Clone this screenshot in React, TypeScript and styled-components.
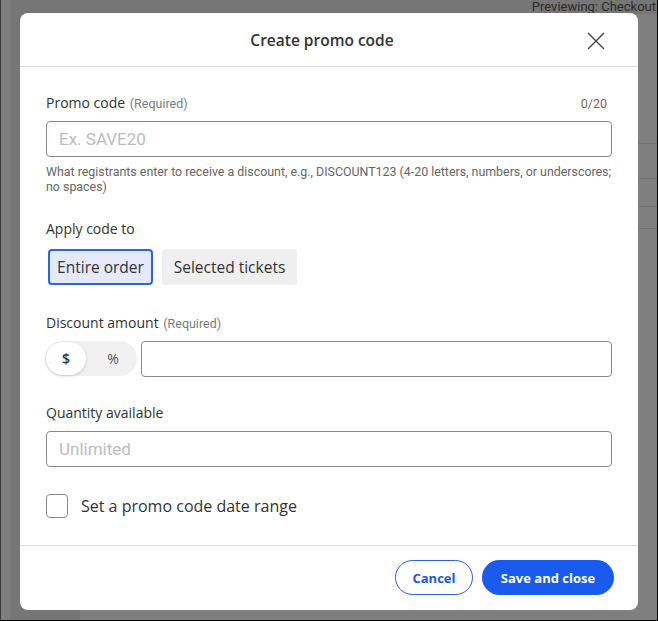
import styled, { createGlobalStyle } from "styled-components";

const GlobalStyle = createGlobalStyle`
  html, body {
    margin: 0;
    padding: 0;
  }
  body {
    font-family: "Open Sans", Lato, sans-serif;
  }
  * {
    box-sizing: border-box;
  }
`;

const panelRows = [130, 35, 28, 22, 400];

export default function App() {
  return (
    <>
      <GlobalStyle />
      <Frame>
        <SideNav />
        <Main>
          <TopBar>
            <Preview>Previewing: Checkout</Preview>
          </TopBar>
          <Content>
            <Gutter />
            <Panel>
              {panelRows.map((h, i) => (
                <PanelRow key={i} $height={h} />
              ))}
            </Panel>
          </Content>
        </Main>

        <Overlay>
          <Modal>
            <Header>
              <Title>Create promo code</Title>
              <CloseButton aria-label="Close">
                <svg width="18" height="18" viewBox="0 0 18 18">
                  <path
                    d="M1 1 L17 17 M17 1 L1 17"
                    stroke="#444"
                    strokeWidth="1.4"
                    fill="none"
                  />
                </svg>
              </CloseButton>
            </Header>

            <Body>
              <LabelRow>
                <Label>
                  Promo code <Required>(Required)</Required>
                </Label>
                <Counter>0/20</Counter>
              </LabelRow>
              <TextInput placeholder="Ex. SAVE20" />
              <Help>
                What registrants enter to receive a discount, e.g., DISCOUNT123
                (4-20 letters, numbers, or underscores; no spaces)
              </Help>

              <LabelRow $gap={26}>
                <Label>Apply code to</Label>
              </LabelRow>
              <SegmentGroup>
                <Segment $active $width={105}>
                  Entire order
                </Segment>
                <Segment $width={135}>Selected tickets</Segment>
              </SegmentGroup>

              <LabelRow $gap={29}>
                <Label>
                  Discount amount <Required>(Required)</Required>
                </Label>
              </LabelRow>
              <AmountRow>
                <UnitToggle>
                  <UnitOption $active>$</UnitOption>
                  <UnitOption>%</UnitOption>
                </UnitToggle>
                <TextInput />
              </AmountRow>

              <LabelRow $gap={27}>
                <Label>Quantity available</Label>
              </LabelRow>
              <TextInput placeholder="Unlimited" />

              <CheckRow>
                <CheckBox />
                <CheckLabel>Set a promo code date range</CheckLabel>
              </CheckRow>
            </Body>

            <Footer>
              <OutlineButton>Cancel</OutlineButton>
              <PrimaryButton>Save and close</PrimaryButton>
            </Footer>
          </Modal>
        </Overlay>
      </Frame>
    </>
  );
}

const Frame = styled.div`
  position: relative;
  width: 658px;
  height: 621px;
  display: flex;
  overflow: hidden;
  background: #ececec;
  border-left: 1px solid #3c3c3c;
  border-right: 1px solid #000;
  border-bottom: 1px solid #000;
`;

const SideNav = styled.div`
  width: 9px;
  background: #ffffff;
`;

const Main = styled.div`
  flex: 1;
  display: flex;
  flex-direction: column;
`;

const TopBar = styled.div`
  height: 30px;
  display: flex;
  justify-content: flex-end;
`;

const Preview = styled.span`
  font-family: Roboto, "Liberation Sans", sans-serif;
  font-size: 13px;
  line-height: 15px;
  color: #585858;
  margin-top: -1px;
  margin-right: 1px;
`;

const Content = styled.div`
  flex: 1;
  display: flex;
`;

const Gutter = styled.div`
  width: 70px;
`;

const Panel = styled.div`
  flex: 1;
  background: #ffffff;
`;

const PanelRow = styled.div<{ $height: number }>`
  height: ${(p) => p.$height}px;
  border-bottom: 1px solid #e6e6e6;
`;

const Overlay = styled.div`
  position: absolute;
  inset: 0;
  background: rgba(0, 0, 0, 0.5);
  padding: 13px 0 0 19px;
`;

const Modal = styled.div`
  width: 618px;
  height: 597px;
  background: #ffffff;
  border-radius: 8px;
  display: flex;
  flex-direction: column;
  overflow: hidden;
`;

const Header = styled.div`
  position: relative;
  height: 54px;
  flex-shrink: 0;
  display: flex;
  align-items: center;
  justify-content: center;
  padding-right: 14px;
  border-bottom: 1px solid #dcdcdc;
`;

const Title = styled.h2`
  margin: 0;
  padding-top: 1px;
  font-size: 15.5px;
  font-weight: 600;
  color: #333333;
`;

const CloseButton = styled.button`
  position: absolute;
  right: 32px;
  top: 18px;
  width: 20px;
  height: 20px;
  padding: 1px;
  border: none;
  background: none;
  cursor: pointer;
`;

const Body = styled.div`
  flex: 1;
  padding: 27px 26px 0;
  display: flex;
  flex-direction: column;
`;

const LabelRow = styled.div<{ $gap?: number }>`
  display: flex;
  justify-content: space-between;
  align-items: baseline;
  height: 18px;
  margin-top: ${(p) => p.$gap ?? 0}px;
`;

const Label = styled.span`
  font-size: 14px;
  line-height: 18px;
  color: #333333;
`;

const Required = styled.span`
  font-family: Roboto, "Liberation Sans", sans-serif;
  font-size: 12.5px;
  color: #7a7a7a;
  margin-left: 1px;
`;

const Counter = styled.span`
  font-family: Roboto, "Liberation Sans", sans-serif;
  font-size: 12.5px;
  color: #6a6a6a;
  margin-right: 5px;
`;

const TextInput = styled.input`
  width: 100%;
  height: 36px;
  margin-top: 9px;
  padding: 0 12px;
  border: 1px solid #8a8a8a;
  border-radius: 4px;
  font-family: Roboto, "Liberation Sans", sans-serif;
  font-size: 17px;
  color: #333333;
  background: #ffffff;
  outline: none;

  &::placeholder {
    color: #bcbcbc;
  }
`;

const Help = styled.p`
  margin: 7px 0 0;
  font-family: Roboto, "Liberation Sans", sans-serif;
  font-size: 12.4px;
  line-height: 15px;
  color: #666666;
`;

const SegmentGroup = styled.div`
  display: flex;
  gap: 9px;
  margin-top: 11px;
  padding-left: 2px;
`;

const Segment = styled.button<{ $active?: boolean; $width: number }>`
  width: ${(p) => p.$width}px;
  height: 36px;
  padding: 0;
  border: 2px solid ${(p) => (p.$active ? "#2d63e6" : "transparent")};
  border-radius: 4px;
  background: ${(p) => (p.$active ? "#e4eafb" : "#efefef")};
  font-family: "Open Sans", Lato, sans-serif;
  font-size: 15.5px;
  color: #333333;
  cursor: pointer;
`;

const AmountRow = styled.div`
  display: flex;
  align-items: flex-start;
  gap: 4px;
  margin-left: -1px;

  ${TextInput} {
    flex: 1;
    width: auto;
  }
`;

const UnitToggle = styled.div`
  width: 92px;
  height: 35px;
  margin-top: 9px;
  padding: 1px;
  display: flex;
  align-items: center;
  border-radius: 18px;
  background: #f0f0f0;
`;

const UnitOption = styled.span<{ $active?: boolean }>`
  width: ${(p) => (p.$active ? "40px" : "auto")};
  flex: ${(p) => (p.$active ? "none" : "1")};
  height: 33px;
  display: flex;
  align-items: center;
  justify-content: center;
  padding-left: ${(p) => (p.$active ? "0" : "4px")};
  border-radius: 17px;
  font-size: 14px;
  font-weight: ${(p) => (p.$active ? 600 : 400)};
  color: ${(p) => (p.$active ? "#333333" : "#555555")};
  background: ${(p) => (p.$active ? "#ffffff" : "transparent")};
  box-shadow: ${(p) => (p.$active ? "0 1px 3px rgba(0, 0, 0, 0.18)" : "none")};
`;

const CheckRow = styled.div`
  display: flex;
  align-items: center;
  gap: 13px;
  margin-top: 27px;
`;

const CheckBox = styled.span`
  width: 22px;
  height: 24px;
  border: 1px solid #8a8a8a;
  border-radius: 4px;
  background: #ffffff;
`;

const CheckLabel = styled.span`
  font-size: 16px;
  color: #333333;
`;

const Footer = styled.div`
  height: 65px;
  flex-shrink: 0;
  display: flex;
  align-items: center;
  justify-content: flex-end;
  gap: 9px;
  padding: 0 24px 1px 0;
  border-top: 1px solid #dcdcdc;
`;

const OutlineButton = styled.button`
  width: 78px;
  height: 35px;
  border: 1px solid #2a5fe6;
  border-radius: 18px;
  background: #ffffff;
  font-family: "Open Sans", Lato, sans-serif;
  font-size: 13px;
  font-weight: 700;
  color: #1d56e0;
  cursor: pointer;
`;

const PrimaryButton = styled.button`
  width: 132px;
  height: 35px;
  border: none;
  border-radius: 18px;
  background: #1a5bef;
  font-family: "Open Sans", Lato, sans-serif;
  font-size: 13px;
  font-weight: 700;
  color: #ffffff;
  cursor: pointer;
`;
